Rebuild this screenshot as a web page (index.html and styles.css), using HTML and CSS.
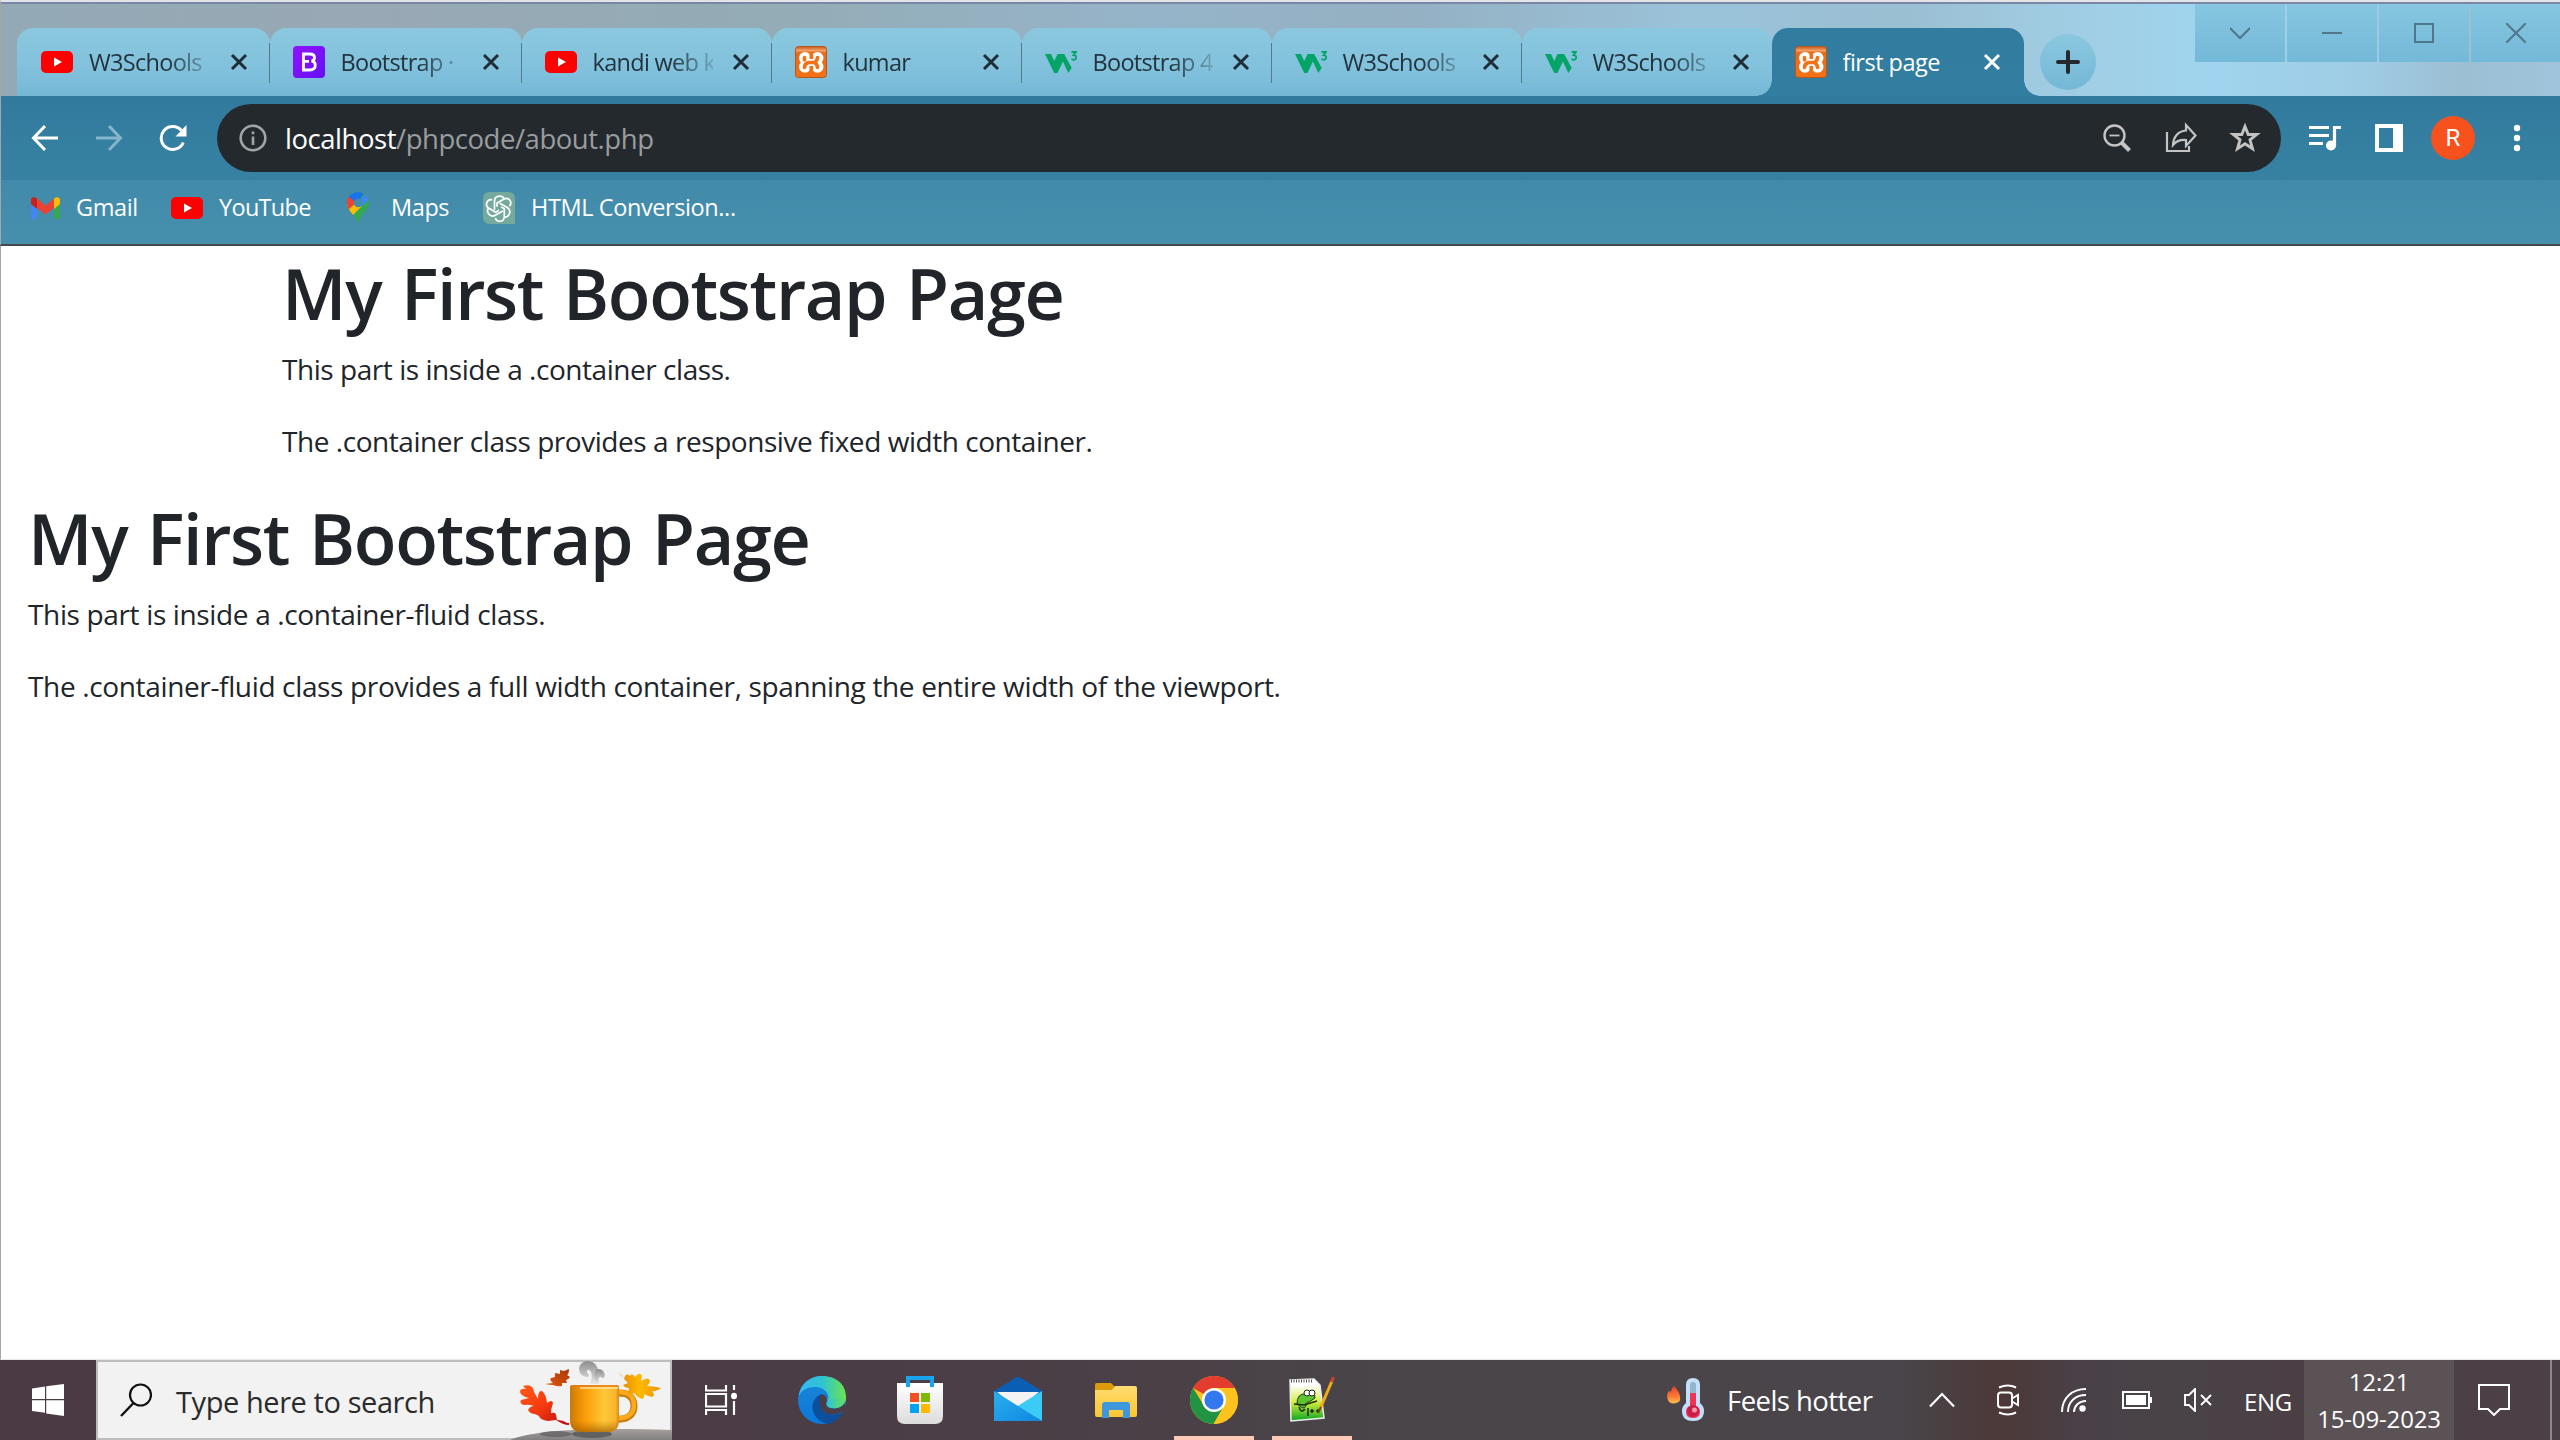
FILE: index.html
```html
<!DOCTYPE html>
<html lang="en">
<head>
<meta charset="utf-8">
<title>first page</title>
<link rel="stylesheet" href="styles.css">
</head>
<body>
<svg class="defs" width="0" height="0">
  <defs>
    <linearGradient id="gB" x1="0" y1="0" x2="1" y2="1"><stop offset="0" stop-color="#9013fe"/><stop offset="1" stop-color="#6610f2"/></linearGradient>
    <linearGradient id="gX" x1="0" y1="0" x2="0" y2="1"><stop offset="0" stop-color="#c65a17"/><stop offset=".13" stop-color="#f3a267"/><stop offset=".2" stop-color="#ec6a17"/><stop offset="1" stop-color="#f37216"/></linearGradient>
    <symbol id="yt" viewBox="0 0 32 32"><rect y="5" width="32" height="22" rx="5" fill="#f00"/><path d="M13 11.5v9l8-4.500z" fill="#fff"/></symbol>
    <symbol id="bs" viewBox="0 0 32 32"><rect width="32" height="32" rx="4" fill="url(#gB)"/><path d="M10.500 8h6.200c3 0 4.800 1.400 4.800 3.700 0 1.800-1.200 3-2.900 3.500 2.300.3 3.700 1.800 3.700 4.100 0 3-2.200 4.700-5.700 4.700h-6.100z M10.500 15.300h5.500" fill="none" stroke="#fff" stroke-width="2.800"/></symbol>
    <symbol id="xampp" viewBox="0 0 32 32"><rect x=".5" y=".5" width="31" height="31" rx="3" fill="url(#gX)" stroke="#b8571b"/><g fill="#fff"><circle cx="10" cy="12" r="6"/><circle cx="22.500" cy="12" r="6"/><circle cx="10" cy="20.800" r="6"/><circle cx="22.500" cy="20.800" r="6"/><path d="M10 12h12v9H10z"/></g><g fill="none" stroke="#f37216" stroke-width="3.600" stroke-linecap="round" stroke-linejoin="round"><path d="M9.500 11.500v2.500M22.500 11.500q0 3-3 5 3 2 3 5M9.500 21.500q0-4 4-5h5"/></g><path d="M14.500 7h3.600v6h-3.600zM14.500 20h3.600v7h-3.600z" fill="#f07014"/></symbol>
    <symbol id="w3" viewBox="0 0 32 32"><path d="M0 8h6l3.200 7 3.400-7h6.600l7.500 14-3.400 5-5.400-11.500L12.500 27h-3.300z" fill="#04a467"/><path d="M26.500 6h4.500l-2.500 3.200c4 0 3.300 5-.2 4.600l-1.800-.8" fill="none" stroke="#04a467" stroke-width="1.800"/></symbol>
    <symbol id="close" viewBox="0 0 18 18"><path d="M2 2l14 14M16 2L2 16" fill="none" stroke="currentColor" stroke-width="3"/></symbol>
    <linearGradient id="mug"><stop offset="0" stop-color="#c87a08"/><stop offset=".3" stop-color="#fb9c06"/><stop offset=".7" stop-color="#ffc838"/><stop offset=".93" stop-color="#f9b42d"/><stop offset="1" stop-color="#d98a12"/></linearGradient>
    <linearGradient id="mugShade" x1="0" y1="0" x2="0" y2="1"><stop offset=".75" stop-color="#b96b00" stop-opacity="0"/><stop offset="1" stop-color="#9c5c00" stop-opacity=".7"/></linearGradient>
    <linearGradient id="leafR" x1="0" y1="0" x2="1" y2="1"><stop offset="0" stop-color="#ff5a16"/><stop offset=".5" stop-color="#f53a10"/><stop offset="1" stop-color="#b80b12"/></linearGradient>
    <linearGradient id="leafS" x1="0" y1="1" x2="1" y2="0"><stop offset="0" stop-color="#e25a10"/><stop offset="1" stop-color="#a83608"/></linearGradient>
    <linearGradient id="leafY"><stop offset="0" stop-color="#e08208"/><stop offset=".5" stop-color="#ffb900"/><stop offset="1" stop-color="#ee960c"/></linearGradient>
    <linearGradient id="hill" x1="0" y1="0" x2="0" y2="1"><stop offset="0" stop-color="#a79f9e"/><stop offset="1" stop-color="#808080"/></linearGradient>
    <linearGradient id="steam" x1="0" y1="0" x2="0" y2="1"><stop offset="0" stop-color="#8c8c8c"/><stop offset="1" stop-color="#e8e8e8"/></linearGradient>
    <linearGradient id="edgeA"><stop offset="0" stop-color="#35b9f5"/><stop offset=".5" stop-color="#2fc4d0"/><stop offset="1" stop-color="#6be44e"/></linearGradient>
    <linearGradient id="edgeB" x1="0" y1="0" x2="0" y2="1"><stop offset="0" stop-color="#1b87d4"/><stop offset="1" stop-color="#0a78dc"/></linearGradient>
    <linearGradient id="storeG" x1="0" y1="0" x2="0" y2="1"><stop offset="0" stop-color="#fff"/><stop offset="1" stop-color="#dcdcdc"/></linearGradient>
    <linearGradient id="mailG" x1="0" y1="0" x2="1" y2="1"><stop offset="0" stop-color="#2cb0ee"/><stop offset="1" stop-color="#0f86e0"/></linearGradient>
    <linearGradient id="folderG" x1="0" y1="0" x2="0" y2="1"><stop offset="0" stop-color="#ffdc72"/><stop offset="1" stop-color="#fcc62f"/></linearGradient>
    <linearGradient id="nppG" x1="0" y1="0" x2="0" y2="1"><stop offset=".15" stop-color="#fff"/><stop offset=".55" stop-color="#d4ec3c"/><stop offset="1" stop-color="#08a520"/></linearGradient>
    <linearGradient id="flame" x1="0" y1="0" x2="0" y2="1"><stop offset="0" stop-color="#e8402c"/><stop offset=".6" stop-color="#fb7a35"/><stop offset="1" stop-color="#ffc04c"/></linearGradient>
  </defs>
</svg>

<div class="screen">
  <header class="browser">
    <div class="tabstrip">
      <nav class="tabs">
        <div class="tab first"><svg class="fav"><use href="#yt"/></svg><span class="title">W3Schools</span><svg class="close"><use href="#close"/></svg></div>
        <div class="tab"><svg class="fav"><use href="#bs"/></svg><span class="title">Bootstrap ·</span><svg class="close"><use href="#close"/></svg></div>
        <div class="tab"><svg class="fav"><use href="#yt"/></svg><span class="title">kandi web k</span><svg class="close"><use href="#close"/></svg></div>
        <div class="tab"><svg class="fav"><use href="#xampp"/></svg><span class="title">kumar</span><svg class="close"><use href="#close"/></svg></div>
        <div class="tab"><svg class="fav"><use href="#w3"/></svg><span class="title">Bootstrap 4</span><svg class="close"><use href="#close"/></svg></div>
        <div class="tab"><svg class="fav"><use href="#w3"/></svg><span class="title">W3Schools</span><svg class="close"><use href="#close"/></svg></div>
        <div class="tab last"><svg class="fav"><use href="#w3"/></svg><span class="title">W3Schools</span><svg class="close"><use href="#close"/></svg></div>
        <div class="tab active"><svg class="fav"><use href="#xampp"/></svg><span class="title">first page</span><svg class="close"><use href="#close"/></svg></div>
      </nav>
      <div class="newtab"><svg width="24" height="24" viewBox="0 0 24 24"><path d="M12 2v20M2 12h20" stroke="#24292d" stroke-width="4" stroke-linecap="round"/></svg></div>
      <div class="winbtns">
        <div class="winbtn"><svg width="20" height="20" viewBox="0 0 20 20"><path d="M0 5l10 10L20 5"/></svg></div>
        <div class="winbtn"><svg width="20" height="20" viewBox="0 0 20 20"><path d="M0 10h20"/></svg></div>
        <div class="winbtn"><svg width="20" height="20" viewBox="0 0 20 20"><path d="M1 1h18v18H1z"/></svg></div>
        <div class="winbtn"><svg width="20" height="20" viewBox="0 0 20 20"><path d="M0 0l20 20M20 0L0 20"/></svg></div>
      </div>
    </div>

    <div class="toolbar">
      <svg class="nav" viewBox="0 0 28 28"><path d="M27 14H3M14 2L2.500 14 14 26" fill="none" stroke="#fff" stroke-width="3"/></svg>
      <svg class="nav dim" viewBox="0 0 28 28"><path d="M1 14h24M14 2l11.500 12L14 26" fill="none" stroke="#86b5cb" stroke-width="3"/></svg>
      <svg class="nav" viewBox="0 0 28 28"><path d="M24.300 18.500A11.500 11.500 0 1 1 22.500 6.500" fill="none" stroke="#fff" stroke-width="3"/><path d="M27.500 1v11.500H16.500z" fill="#fff"/></svg>
      <div class="omnibox">
        <svg width="28" height="28" viewBox="0 0 28 28"><circle cx="14" cy="14" r="12.300" fill="none" stroke="#a0a5a8" stroke-width="2.600"/><path d="M14 12.500v8.500M14 7.500v2.800" stroke="#a0a5a8" stroke-width="2.600"/></svg>
        <span class="url">localhost<span class="path">/phpcode/about.php</span></span>
        <svg class="act" viewBox="0 0 32 32"><g fill="none" stroke="#c3c3c3"><circle cx="13.500" cy="13.500" r="10" stroke-width="2.400"/><path d="M8.500 13.500h10" stroke-width="1.800"/><path d="M20.500 20.500l8 8" stroke-width="4"/></g></svg>
        <svg class="act" viewBox="0 0 32 32"><path d="M2 10v19h22v-5" fill="none" stroke="#c3c3c3" stroke-width="2.200"/><path d="M21 3l9.500 10.500L21 24v-6c-6-.5-10 1.300-13 5 .3-8 5-14 13-14.500z" fill="none" stroke="#c3c3c3" stroke-width="2.200"/></svg>
        <svg class="act" viewBox="0 0 32 32"><path d="M16 4.500l3.200 8h8.500l-6.700 5.400 2.500 8.800L16 21.800l-7.500 4.900 2.500-8.800-6.700-5.400h8.500z" fill="none" stroke="#c3c3c3" stroke-width="2.900"/></svg>
      </div>
      <div class="tools">
        <svg width="34" height="28" viewBox="0 0 34 28"><path d="M1 3.500h20M1 11.500h20M1 19.500h14" stroke="#fff" stroke-width="3"/><path d="M26.500 22V3.500h6.500" fill="none" stroke="#fff" stroke-width="3.200"/><circle cx="23" cy="21.500" r="5" fill="#fff"/></svg>
        <svg width="28" height="28" viewBox="0 0 28 28"><path fill-rule="evenodd" d="M0 0h28v28H0zM4 4v20h14V4z" fill="#fff"/></svg>
        <div class="avatar">R</div>
        <svg width="8" height="28" viewBox="0 0 8 28"><g fill="#fff"><circle cx="4" cy="4" r="3.200"/><circle cx="4" cy="14" r="3.200"/><circle cx="4" cy="24" r="3.200"/></g></svg>
      </div>
    </div>

    <div class="bookmarks">
      <div class="bm gmail"><svg width="29" height="32" viewBox="0 0 29 32"><path d="M0 9v16q0 2 2 2h4V11z" fill="#4285f4"/><path d="M29 9v16q0 2-2 2h-4V11z" fill="#34a853"/><path d="M29 12V8c0-3-3.500-3.500-6-1.500V17z" fill="#fbbc04"/><path d="M0 12V8c0-3 3.500-3.500 6-1.500V17z" fill="#c5221f"/><path d="M6 6.500l8.500 7 8.500-7V16l-8.500 6.500L6 16z" fill="#ea4335"/></svg><span>Gmail</span></div>
      <div class="bm youtube"><svg width="32" height="32"><use href="#yt"/></svg><span>YouTube</span></div>
      <div class="bm maps"><svg width="22" height="32" viewBox="0 0 22 32"><defs><clipPath id="pin"><path d="M11 0C4.800 0 0 5 0 11c0 8 8.500 11 11 21 2.500-10 11-13 11-21C22 5 17.200 0 11 0z"/></clipPath></defs><g clip-path="url(#pin)"><path d="M0 0h22v32H0z" fill="#34a853"/><path d="M0 12L11 11l4 3L4 25H0z" fill="#fbbc04"/><path d="M8 14L20 0h4v6l-10 9z" fill="#4285f4"/><path d="M0 3l11 8-8 8H0z" fill="#ea4335"/><path d="M2 5V0h16l-8 11z" fill="#1a73e8"/><path d="M1 18l10-9 3 5L5 24z" fill="#fbbc04"/></g><circle cx="11" cy="11" r="4.200" fill="#428cab"/></svg><span>Maps</span></div>
      <div class="bm gpt"><svg width="32" height="32" viewBox="0 0 32 32"><path d="M7 0h18q7 0 7 7v25H7q-7 0-7-7V7q0-7 7-7z" fill="#74aa9c"/><g fill="none" stroke="#fff" stroke-width="1.700" stroke-linejoin="round"><g id="petal"><path d="M11.500 17.800V9.200c0-6 8.300-7 9.800-1.700M14 14.800v-3.700l7.200-4.200c5-2 8.500 3.500 5.300 7.300"/></g><use href="#petal" transform="rotate(120 16 16)"/><use href="#petal" transform="rotate(240 16 16)"/></g></svg><span>HTML Conversion...</span></div>
    </div>
  </header>

  <main class="page">
    <div class="container">
      <h1>My First Bootstrap Page</h1>
      <p class="p1">This part is inside a .container class.</p>
      <p class="p1">The .container class provides a responsive fixed width container.</p>
    </div>
    <div class="container-fluid">
      <h1>My First Bootstrap Page</h1>
      <p>This part is inside a .container-fluid class.</p>
      <p>The .container-fluid class provides a full width container, spanning the entire width of the viewport.</p>
    </div>
  </main>

  <footer class="taskbar">
    <div class="start"><svg width="32" height="32" viewBox="0 0 32 32"><path d="M0 4.500L13 2.500V15H0zM14.200 2.300L32 0v15H14.200zM0 16.200h13v12.500L0 27zM14.200 16.200H32V32l-17.800-2.500z" fill="#fff"/></svg></div>
    <div class="search">
      <svg width="32" height="34" viewBox="0 0 32 34"><circle cx="20.500" cy="12" r="10.500" fill="none" stroke="#111" stroke-width="2.200"/><path d="M13.500 20L1 33" stroke="#111" stroke-width="2.400"/></svg>
      <span class="prompt">Type here to search</span>
      <svg class="autumn" width="162" height="80" viewBox="510 1360 162 80">
        <path d="M510 1440c20-8 60-13 162-10v10z" fill="url(#hill)"/><ellipse cx="556" cy="1434" rx="16" ry="3" fill="#555" opacity=".6"/><ellipse cx="592" cy="1434" rx="20" ry="4" fill="#555" opacity=".8"/>
        <path d="M590 1384q3-7 1-12-4-5-4 1 3 1 1 4-8 0-9-8 1-8 9-8 10 1 10 11l-2 12z" fill="url(#steam)"/><path d="M596 1384q-4-12 1-15 7-1 8 7-2 4-4 1-3-2-2 7z" fill="url(#steam)"/>
        <path d="M619 1393c12 0 15 7 15 13 0 9-7 14-17 13" fill="none" stroke="#c77c0c" stroke-width="7"/><path d="M619 1392c12 0 15 7 15 13 0 9-7 14-17 13" fill="none" stroke="#fba91b" stroke-width="4.500"/>
        <path d="M570 1387q0-2 2-2h45q2 0 2 2v33q0 12-11 12h-26q-12 0-12-12z" fill="url(#mug)"/><path d="M570 1387q0-2 2-2h45q2 0 2 2v33q0 12-11 12h-26q-12 0-12-12z" fill="url(#mugShade)"/><path d="M572 1386h46" stroke="#e77a18" stroke-width="1.500"/><path d="M580 1388h38" stroke="#ffe3a0" stroke-width="1.500"/>
        <path d="M523 1386q10-3 11 6l4 7q0-9 4-8 4 3 5 12 5-4 6 0-2 6-2 10 5-1 5 2l1 5q6 0 10 3l2 0v-1 3q-6 0-13-5l-8 1q-8-1-9-5l-4-2q-5 0-7-4 2-4 6-4-5-2-10-1-5-1-3-5l8-2q-8-2-9-6 0-4 6-3z" fill="url(#leafR)"/>
        <path d="M545 1384l8-1q-4-3-2-5l4-1 0-4 5 1 0-4 4 1 5-2q0 5-2 6l3 2q-2 3-4 3l1 3-5 0 0 3q-4 1-9-1-3 0-8-1z" fill="url(#leafS)"/>
        <path d="M618 1372q4 3 6 7 2-7 6-3 2-4 5 1 5-6 7-1l-1 5q8-5 9 0-1 4-3 5 6 0 14 2-4 4-9 3 4 4 0 6-5-1-8-3 1 4-2 5-5-2-8-6-2 2-6 0 1-4 1-5-4 0-6-3l5-2q-6-6-9-10z" fill="url(#leafY)"/>
      </svg>
    </div>
    <div class="apps">
      <div class="app"><svg class="taskview" width="32" height="32" viewBox="0 0 32 32"><path d="M1 1v5.500h20V1M1 31v-5h20v5M1 10h20v12.500H1z M29 1v5M29 17v14" fill="none" stroke="#fff" stroke-width="2.200"/><ellipse cx="29" cy="12" rx="3" ry="3.300" fill="#fff"/></svg></div>
      <div class="app"><svg width="48" height="48" viewBox="0 0 48 48"><circle cx="24" cy="24" r="24" fill="url(#edgeB)"/><path d="M1 20C2 8 12 0 24 0c15 0 24 9 24 21 0 8-7 12-14 11-5-.5-6-3-5-5 5-9-3-16-12-16C9 11 4 14 1 20z" fill="url(#edgeA)"/><path d="M24 18c-14 4-13 26 6 30 6-1 11-5 15-12-9 5-20 2-21-5-1-4 0-8 2-11z" fill="#0c4f9c"/><path d="M23 19c3-1 7 2 6 6-1 2-2 4 1 6 5 3 12 2 17-4l1 10q-1-1-4-1c-9 5-20 2-21-5-1-4-2-9 0-12z" fill="#4b3e46"/><path d="M29 24c5-9-5-18-16-13C26 8 33 17 29 26c-1 3 1 5.500 5 6 7 1 14-3 14-11z" fill="url(#edgeA)"/></svg></div>
      <div class="app"><svg width="46" height="48" viewBox="0 0 46 48"><path d="M0 7h46v33q0 8-8 8H8q-8 0-8-8z" fill="url(#storeG)"/><path d="M11 11V2h24v9" fill="none" stroke="#18a4ef" stroke-width="4"/><path d="M13 17h9v9h-9z" fill="#f25022"/><path d="M24 17h9v9h-9z" fill="#7fba00"/><path d="M13 28h9v9h-9z" fill="#00a4ef"/><path d="M24 28h9v9h-9z" fill="#ffb900"/></svg></div>
      <div class="app"><svg width="48" height="48" viewBox="0 0 48 48"><path d="M0 15L21 2q3-2 6 0l21 13v6H0z" fill="#0a5eb4"/><path d="M3 16h42L24 34z" fill="#f3f3f3"/><path d="M48 15v30L22 31z" fill="#3ccbf4"/><path d="M0 15l48 30H0z" fill="url(#mailG)"/></svg></div>
      <div class="app"><svg width="42" height="36" viewBox="0 0 42 36"><path d="M0 3q0-2 2-2h14l4 4v6H0z" fill="#dd9a0a"/><path d="M0 8h17l3-4h20q2 0 2 2v27q0 2-2 2H2q-2 0-2-2z" fill="url(#folderG)"/><path d="M7 36V23q0-3 3-3h22q3 0 3 3v13h-7v-8H14v8z" fill="#3f97dc"/></svg></div>
      <div class="app running"><svg width="48" height="48" viewBox="0 0 48 48"><circle cx="24" cy="24" r="24" fill="#fcc31e"/><path d="M24 24L3.200 12A24 24 0 0 1 44.800 12H24z" fill="#e33b2e"/><path d="M3.200 12L14 30l10 4 10-4-10.400 18A24 24 0 0 1 3.200 12z" fill="#229342"/><path d="M44.800 12H24l10 18-10.400 18A24 24 0 0 0 44.800 12z" fill="#fcc31e"/><circle cx="24" cy="24" r="12" fill="#fff"/><circle cx="24" cy="24" r="9.600" fill="#3478ef"/></svg></div>
      <div class="app running npp"><svg width="46" height="46" viewBox="0 0 46 46"><path d="M1 3l24-1 6 6 4 33-33 3z" fill="url(#nppG)" stroke="#eee" stroke-width="1.500"/><path d="M2 4h22" stroke="#555" stroke-width="3" stroke-dasharray="1 1.500"/><path d="M8 27q0-11 9-10l3-2q6 0 6 6l-6 4q-4 0-3 4-3 4-6 0z" fill="#5cc433" stroke="#173a12"/><circle cx="18" cy="16" r="3" fill="#fff" stroke="#222"/><circle cx="23" cy="16" r="3" fill="#fff" stroke="#222"/><path d="M5 27l10 1 13-4M10 30q2 7 6 2M19 31v8M21 34h4M23 32v4M27 34h4M29 32v4" fill="none" stroke="#1d2d12" stroke-width="1.500"/><path d="M43 4L31 32" stroke="#f4a917" stroke-width="3"/><path d="M44.500 0l-2 5" stroke="#c74430" stroke-width="3"/><path d="M32 30l-3 6" stroke="#6a4820" stroke-width="2"/></svg></div>
    </div>
    <div class="tray">
      <div class="weather"><svg width="38" height="46" viewBox="0 0 38 46"><path d="M7 9c4 4 7 9 6 14-1 4-11 5-12 0C-1 18 1 14 3 14l1 2c0-3 1-5 3-7z" fill="url(#flame)"/><path d="M19 8q0-7 7-7t7 7v18q4 3 4 8 0 10-11 10T15 34q0-5 4-8z" fill="#c3e0fb"/><path d="M23 8q0-3 3-3t3 3v12h-6z" fill="#93b5cd"/><path d="M23 16h6v13q4 1 4 6 0 6-7 6t-7-6q0-5 4-6z" fill="#ed3656"/><circle cx="26" cy="34" r="6" fill="#c91e45"/><circle cx="27.500" cy="33" r="2.500" fill="#f59ab0"/></svg><span class="feels">Feels hotter</span></div>
      <svg class="chev" width="26" height="16" viewBox="0 0 26 16"><path d="M1 14.500L13 2l12 12.500" fill="none" stroke="#fff" stroke-width="2.200"/></svg>
      <svg class="cam" width="22" height="32" viewBox="0 0 22 32"><g fill="none" stroke="#fff" stroke-width="2"><rect x="1" y="8.500" width="14" height="15" rx="3"/><path d="M15 14.500l6-3.500v10l-6-3.500M2 3.500q9-4 17 0M2 28.500q9 4 17 0"/></g></svg>
      <svg class="wifi" width="26" height="26" viewBox="0 0 26 26"><g fill="none" stroke="#fff" stroke-width="1.900"><path d="M1 25C1 11 11 2 25 2M7 25C7 15 14 8 25 8M13 25c0-6 5-11 12-11"/></g><circle cx="21.500" cy="21.500" r="3.200" fill="#fff"/></svg>
      <svg class="bat" width="30" height="18" viewBox="0 0 30 18"><path d="M1 1h26v16H1z" fill="none" stroke="#fff" stroke-width="2"/><path d="M4 4h20v10H4z" fill="#fff"/><path d="M28 6h2v6h-2z" fill="#fff"/></svg>
      <svg class="vol" width="28" height="24" viewBox="0 0 28 24"><path d="M1 7h4l6-6v22l-6-6H1zM17 7l10 10M27 7L17 17" fill="none" stroke="#fff" stroke-width="1.900"/></svg>
      <span class="lang">ENG</span>
      <div class="clock"><span class="time">12:21</span><span class="date">15-09-2023</span></div>
      <svg class="note" width="32" height="32" viewBox="0 0 32 32"><path d="M1 1h30v24h-9l-6 6-6-6H1z" fill="none" stroke="#fff" stroke-width="2"/></svg>
      <div class="desk"></div>
    </div>
  </footer>
</div>
</body>
</html>
```
FILE: styles.css
```css
* { box-sizing: border-box; }
body {
  margin: 0;
  background: #fff;
  font-family: "Open Sans", "Noto Sans", sans-serif;
  color: #212529;
}
svg { display: block; flex: none; }
.defs { position: absolute; }
.screen {
  width: 2560px;
  height: 1440px;
  display: flex;
  flex-direction: column;
  overflow: hidden;
}

/* Browser chrome */
.browser {
  height: 246px;
  flex: none;
  display: flex;
  flex-direction: column;
  border-top: 2px solid #e2e4e8;
  border-bottom: 2px solid #43494b;
  border-left: 1px solid #a6a6a6;
}
.tabstrip {
  height: 94px;
  flex: none;
  display: flex;
  border-top: 2px solid #7a87a6;
  background: linear-gradient(90deg, #93a9b6 0, #98a8b4 350px, #93acb6 780px, #96b4c9 1150px, #94b0c2 1400px, #9ac3da 1700px, #9abed2 1900px, #a0cce2 2050px, #a0d4ee 2200px, #9fcde6 2350px, #9cbfd3 2460px, #9fc5dc 2560px);
}
.tabs { display: flex; align-items: flex-end; padding-left: 16px; }
.tab {
  position: relative;
  width: 250px;
  height: 68px;
  display: flex;
  align-items: center;
  padding: 0 22px 0 23px;
  border-radius: 16px 16px 0 0;
  background: linear-gradient(#8bc8df, #82c1dc 60%, #74b8d6);
  color: #22343d;
}
.tab.first { width: 252.500px; padding-left: 24px; }
.tab:nth-child(2) { width: 252px; }
.tab:not(.last):not(.active)::after {
  content: "";
  position: absolute;
  right: -1px;
  top: 15px;
  width: 2px;
  height: 40px;
  background: #4f7d8e;
}
.tab.last { border-bottom-right-radius: 16px; }
.fav { width: 32px; height: 32px; margin-right: 16px; }
.close { width: 18px; height: 18px; color: #1f2e36; }
.title {
  flex: 1;
  min-width: 0;
  margin-right: 19px;
  overflow: hidden;
  white-space: nowrap;
  font-size: 23.500px;
  line-height: 34px;
  letter-spacing: -0.700px;
  -webkit-mask-image: linear-gradient(90deg, #000 78px, transparent 130px);
}
.tab.active {
  width: 252px;
  background: linear-gradient(#317ca0, #327ea0);
  color: #fff;
}
.tab.active .title { -webkit-mask-image: none; letter-spacing: -0.500px; }
.tab.active .close { color: #fff; margin-right: 1px; }
.tab.active::before, .tab.active::after {
  content: "";
  position: absolute;
  bottom: 0;
  width: 16px;
  height: 16px;
}
.tab.active::before { left: -16px; background: radial-gradient(circle at 0 0, transparent 15.500px, #327ea0 16px); }
.tab.active::after { right: -16px; background: radial-gradient(circle at 100% 0, transparent 15.500px, #327ea0 16px); }
.newtab {
  width: 56px;
  height: 56px;
  margin: 30px 0 0 16px;
  border-radius: 50%;
  background: linear-gradient(#8bc8df, #74b8d6);
  display: flex;
  align-items: center;
  justify-content: center;
}
.winbtns { display: flex; gap: 2px; margin-left: auto; margin-right: -1px; }
.winbtn {
  width: 90px;
  height: 58px;
  display: flex;
  align-items: center;
  justify-content: center;
  background: linear-gradient(#86c6e0, #74b9d8);
}
.winbtn path { fill: none; stroke: #4f7789; stroke-width: 2; }

.toolbar {
  height: 84px;
  flex: none;
  display: flex;
  align-items: center;
  padding-left: 30px;
  background: linear-gradient(#317a9e, #3782a3);
}
.nav { width: 28px; height: 28px; margin-right: 36px; }
.omnibox {
  width: 2064px;
  height: 68px;
  margin-left: -6px;
  padding: 0 20px 0 22px;
  display: flex;
  align-items: center;
  border-radius: 34px;
  background: #23292d;
}
.url { flex: 1; margin-left: 18px; font-size: 27.500px; letter-spacing: -0.460px; color: #fff; }
.path { color: #9a9d9f; }
.act { width: 32px; height: 32px; margin-left: 32px; }
.tools { display: flex; align-items: center; margin-left: 27px; }
.tools svg:nth-child(2) { margin-left: 33px; }
.avatar {
  width: 44px;
  height: 44px;
  margin: 0 38px 0 28px;
  border-radius: 50%;
  background: #f7511d;
  color: #fff;
  font: 24px/44px Roboto, sans-serif;
  text-align: center;
}
.bookmarks {
  height: 64px;
  flex: none;
  display: flex;
  align-items: center;
  padding: 0 0 8px 30px;
  background: linear-gradient(#418aa9, #4690ae);
  color: #fff;
  font-size: 23.500px;
  line-height: 32px;
  white-space: nowrap;
}
.bm { display: flex; align-items: center; gap: 16px; letter-spacing: -0.400px; }
.bm span { padding-bottom: 2px; }
.bm.gmail { width: 140px; }
.bm.youtube { width: 176px; letter-spacing: -0.700px; }
.bm.maps { width: 136px; gap: 22px; }

/* Page */
.page { flex: 1; min-height: 0; padding-top: 1px; border-left: 1px solid #a6a6a6; border-bottom: 1px solid #e9e9e9; }
.container { padding-left: 281px; }
.container-fluid { padding-left: 27px; }
h1 {
  margin: 0;
  padding-top: 3px;
  height: 100.800px;
  font-size: 70px;
  font-weight: 600;
  line-height: 86.400px;
  letter-spacing: -1.350px;
  word-spacing: 3px;
}
p { margin: 0 0 28.800px; font-size: 28px; line-height: 43.200px; letter-spacing: -0.350px; }
.p1 { letter-spacing: -0.450px; }

/* Taskbar */
.taskbar {
  height: 80px;
  flex: none;
  display: flex;
  background: linear-gradient(90deg, #4b3944 0, #4b3e46 1000px, #494549 1400px, #49454a 1900px, #4c3938 2000px, #4a4048 2080px, #494348 2150px, #4b3f45 2300px, #4b4046 2560px);
  color: #fff;
}
.start { width: 96px; display: flex; align-items: center; justify-content: center; }
.search {
  width: 576px;
  display: flex;
  align-items: center;
  padding-left: 22px;
  border: 2px solid #bdbdbd;
  background: #f2f2f2;
  color: #2b2b2b;
}
.prompt { flex: 1; margin: 2px 0 0 24px; font-size: 29px; letter-spacing: -0.420px; white-space: nowrap; }
.autumn { margin-right: -2px; }
.apps { display: flex; padding-left: 3px; }
.app { width: 98px; display: flex; align-items: center; justify-content: center; position: relative; }
.app.running::after {
  content: "";
  position: absolute;
  left: 9px;
  bottom: 0;
  width: 80px;
  height: 4px;
  background: #ffcab5;
}
.taskview { margin-right: 7px; }
.tray { display: flex; align-items: center; margin-left: auto; }
.weather { display: flex; align-items: center; gap: 22px; width: 262px; }
.feels { font-size: 27.500px; letter-spacing: -0.550px; white-space: nowrap; }
.chev { margin-right: 42px; }
.cam { margin-right: 42px; }
.wifi { margin-right: 35px; }
.bat { margin-right: 32px; }
.vol { margin-right: 32px; }
.lang { width: 60px; font-size: 24px; letter-spacing: -0.300px; margin-top: 2px; }
.clock {
  width: 150px;
  height: 80px;
  display: flex;
  flex-direction: column;
  align-items: center;
  justify-content: center;
  background: #5b5256;
  font-size: 24px;
  line-height: 37px;
  letter-spacing: -0.150px;
}
.note { margin: 0 40px 0 24px; }
.desk { width: 10px; height: 80px; border-left: 2px solid #8f898d; }
```
